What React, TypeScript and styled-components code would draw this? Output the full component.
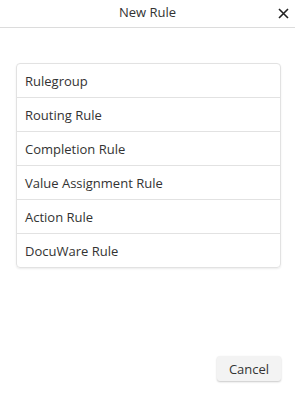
import React from "react";
import styled, { createGlobalStyle } from "styled-components";

const Global = createGlobalStyle`
  html, body { margin: 0; padding: 0; background: #fff; }
  body { font-family: "Open Sans", "Noto Sans", sans-serif; color: #333; }
  #root { height: 100vh; }
`;

const Dialog = styled.div`
  display: flex;
  flex-direction: column;
  height: 100vh;
  box-sizing: border-box;
`;

const Header = styled.div`
  position: relative;
  height: 27px;
  border-bottom: 1px solid #dcdcdc;
  display: flex;
  align-items: center;
  justify-content: center;
  flex-shrink: 0;
`;

const Title = styled.div`
  font-size: 13px;
  color: #333;
  line-height: 1;
  margin-top: -3px;
`;

const Close = styled.button`
  position: absolute;
  right: 5px;
  top: 6px;
  width: 14px;
  height: 14px;
  padding: 0;
  border: none;
  background: transparent;
  display: flex;
  align-items: center;
  justify-content: center;
  cursor: pointer;
`;

const Body = styled.div`
  flex: 1;
  padding: 35px 14px 0 16px;
`;

const List = styled.div`
  border: 1px solid #e2e2e2;
  border-radius: 4px;
  box-shadow: 0 1px 2px rgba(0, 0, 0, 0.08);
  overflow: hidden;
`;

const Item = styled.div<{ $last?: boolean }>`
  height: 33px;
  display: flex;
  align-items: center;
  padding-left: 8px;
  font-size: 13px;
  color: #333;
  border-bottom: ${(p) => (p.$last ? "none" : "1px solid #e2e2e2")};
`;

const Footer = styled.div`
  display: flex;
  justify-content: flex-end;
  padding: 0 14px 13px 0;
`;

const Button = styled.button`
  width: 64px;
  height: 25px;
  border: none;
  border-radius: 3px;
  background: #f3f3f3;
  box-shadow: 0 1px 2px rgba(0, 0, 0, 0.22);
  font-family: "Open Sans", "Noto Sans", sans-serif;
  font-size: 13px;
  color: #333;
  padding: 0;
`;

const items = [
  "Rulegroup",
  "Routing Rule",
  "Completion Rule",
  "Value Assignment Rule",
  "Action Rule",
  "DocuWare Rule",
];

export default function App() {
  return (
    <>
      <Global />
      <Dialog>
        <Header>
          <Title>New Rule</Title>
          <Close aria-label="Close">
            <svg width="11" height="11" viewBox="0 0 11 11">
              <path d="M1 1 L10 10 M10 1 L1 10" stroke="#222" strokeWidth="1.6" fill="none" />
            </svg>
          </Close>
        </Header>
        <Body>
          <List>
            {items.map((t, i) => (
              <Item key={t} $last={i === items.length - 1}>
                {t}
              </Item>
            ))}
          </List>
        </Body>
        <Footer>
          <Button>Cancel</Button>
        </Footer>
      </Dialog>
    </>
  );
}
